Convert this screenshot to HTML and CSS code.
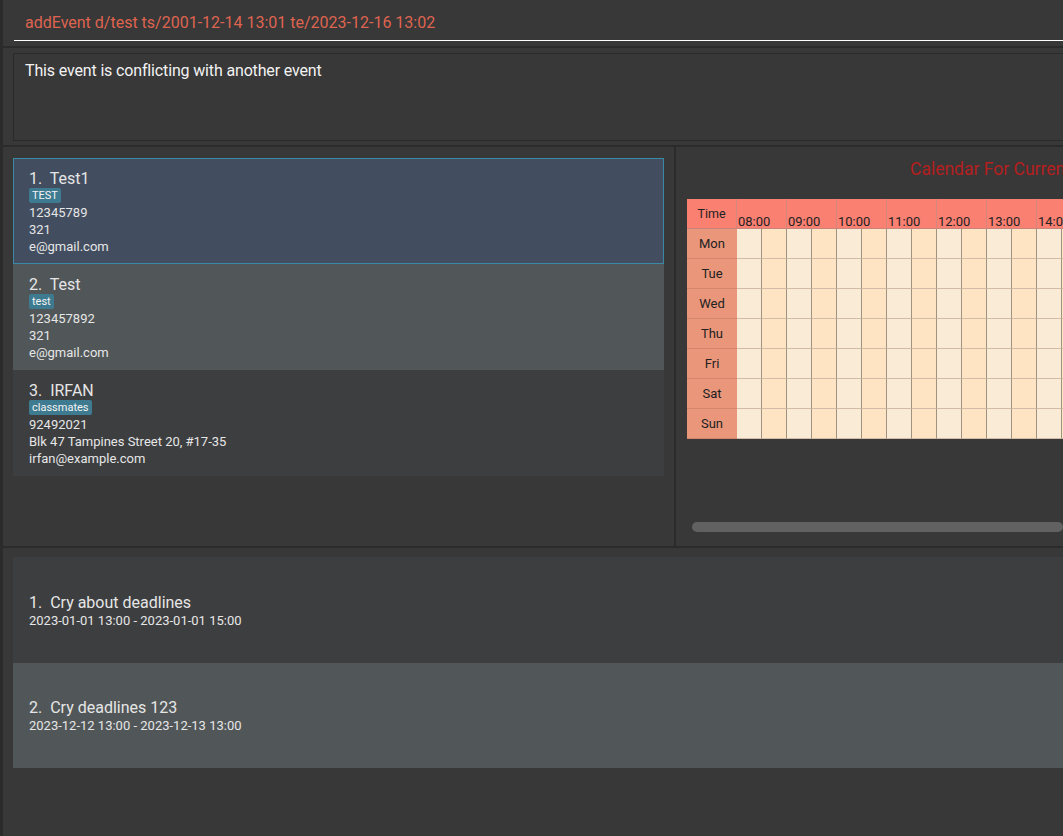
FILE: index.html
```html
<!DOCTYPE html>
<html>
<head>
<meta charset="utf-8">
<link rel="stylesheet" href="styles.css">
</head>
<body>
<div class="window">
  <div class="edge"></div>
  <div class="app">
    <div class="command">
      <div class="cmd-field">addEvent d/test ts/2001-12-14 13:01 te/2023-12-16 13:02</div>
    </div>
    <div class="divider-h"></div>
    <div class="result-pane">
      <div class="result-box">This event is conflicting with another event</div>
    </div>
    <div class="divider-h"></div>
    <div class="middle">
      <div class="person-pane">
        <div class="card person selected">
          <div class="name">1.  Test1</div>
          <div class="tags"><span class="tag">TEST</span></div>
          <div class="line">12345789</div>
          <div class="line">321</div>
          <div class="line">e@gmail.com</div>
        </div>
        <div class="card person even">
          <div class="name">2.  Test</div>
          <div class="tags"><span class="tag">test</span></div>
          <div class="line">123457892</div>
          <div class="line">321</div>
          <div class="line">e@gmail.com</div>
        </div>
        <div class="card person odd">
          <div class="name">3.  IRFAN</div>
          <div class="tags"><span class="tag">classmates</span></div>
          <div class="line">92492021</div>
          <div class="line">Blk 47 Tampines Street 20, #17-35</div>
          <div class="line">irfan@example.com</div>
        </div>
      </div>
      <div class="divider-v"></div>
      <div class="calendar-pane">
        <div class="cal-title">Calendar For Current Week</div>
        <div class="cal-grid" id="grid">
          <div class="hdr time">Time</div>
          <div class="hdr hour">08:00</div>
          <div class="hdr hour">09:00</div>
          <div class="hdr hour">10:00</div>
          <div class="hdr hour">11:00</div>
          <div class="hdr hour">12:00</div>
          <div class="hdr hour">13:00</div>
          <div class="hdr hour">14:00</div>
          <div class="hdr hour">15:00</div>
          <div class="hdr hour">16:00</div>
        </div>
        <div class="scrollbar"><div class="thumb"></div></div>
      </div>
    </div>
    <div class="divider-h"></div>
    <div class="event-pane">
      <div class="card event odd">
        <div class="name">1.  Cry about deadlines</div>
        <div class="line">2023-01-01 13:00 - 2023-01-01 15:00</div>
      </div>
      <div class="card event even">
        <div class="name">2.  Cry deadlines 123</div>
        <div class="line">2023-12-12 13:00 - 2023-12-13 13:00</div>
      </div>
    </div>
  </div>
</div>
<script>
  (function () {
    var grid = document.getElementById('grid');
    var days = ['Mon', 'Tue', 'Wed', 'Thu', 'Fri', 'Sat', 'Sun'];
    days.forEach(function (d) {
      var c = document.createElement('div');
      c.className = 'day';
      c.textContent = d;
      grid.appendChild(c);
      for (var i = 0; i < 18; i++) {
        var s = document.createElement('div');
        s.className = 'slot ' + (i % 2 === 0 ? 'a' : 'b');
        grid.appendChild(s);
      }
    });
  })();
</script>
</body>
</html>
```

FILE: styles.css
```css
html, body {
  margin: 0;
  padding: 0;
  background: #383838;
  width: 1063px;
  height: 836px;
  overflow: hidden;
  font-family: Roboto, "Noto Sans", sans-serif;
}

.window {
  display: flex;
  width: 1063px;
  height: 836px;
}

.edge {
  width: 3px;
  flex: none;
  background: #2b2b2b;
}

.app {
  flex: 1;
  display: flex;
  flex-direction: column;
  min-width: 0;
  overflow: hidden;
}

.command {
  height: 46px;
  padding-left: 11px;
  box-sizing: border-box;
}

.cmd-field {
  height: 41px;
  box-sizing: border-box;
  border-bottom: 1px solid #ffffff;
  padding: 13px 0 0 11px;
  color: #df6450;
  font-size: 16px;
  line-height: 20px;
  white-space: nowrap;
}

.divider-h {
  height: 2px;
  flex: none;
  background: #2b2b2b;
}

.result-pane {
  height: 97px;
  padding: 5px 0 4px 10px;
  box-sizing: border-box;
}

.result-box {
  height: 88px;
  box-sizing: border-box;
  border: 1px solid #2a2a2a;
  border-right: none;
  padding: 7px 0 0 11px;
  color: #f2f2f2;
  font-size: 16px;
  letter-spacing: -0.15px;
  line-height: 20px;
}

.middle {
  height: 399px;
  display: flex;
  flex: none;
}

.person-pane {
  width: 671px;
  flex: none;
  padding: 11px 10px 0 10px;
  box-sizing: border-box;
}

.divider-v {
  width: 2px;
  flex: none;
  background: #2b2b2b;
}

.card {
  color: #e6e6e6;
  box-sizing: border-box;
}

.card.person {
  height: 106px;
  padding: 12px 0 0 16px;
}

.card.selected {
  height: 106px;
  background: #424d5f;
  border: 1px solid #3a8aa5;
  padding: 11px 0 0 15px;
}

.card.even { background: #515658; }
.card.odd { background: #3d3e40; }

.name {
  font-size: 16px;
  line-height: 17px;
  white-space: pre;
}

.tags {
  height: 17px;
  display: flex;
  align-items: flex-start;
  padding-top: 1px;
  box-sizing: border-box;
}

.tag {
  background: #3e7b91;
  color: #f4f4f4;
  font-size: 11px;
  line-height: 15px;
  padding: 0 3px;
  border-radius: 2px;
}

.line {
  font-size: 13px;
  line-height: 17px;
  white-space: nowrap;
}

.calendar-pane {
  flex: 1;
  min-width: 0;
  overflow: hidden;
  padding: 0 0 0 11px;
  box-sizing: border-box;
  display: flex;
  flex-direction: column;
}

.cal-title {
  color: #b41f1f;
  font-size: 17.5px;
  line-height: 22px;
  padding: 11px 0 0 223px;
  height: 52px;
  box-sizing: border-box;
  white-space: nowrap;
}

.cal-grid {
  display: grid;
  grid-template-columns: 50px repeat(18, 25px);
  grid-template-rows: 30px repeat(7, 30px);
  width: max-content;
}

.hdr {
  background: #fa8072;
  color: #222;
  font-size: 12.5px;
  box-sizing: border-box;
  border-right: 1px solid #d6877d;
  border-bottom: 1px solid #c9837a;
}

.hdr.time {
  display: flex;
  align-items: center;
  justify-content: center;
  padding-bottom: 1px;
}

.hdr.hour {
  grid-column: span 2;
  display: flex;
  align-items: flex-end;
  padding: 0 0 0 1px;
  line-height: 13px;
  font-size: 13px;
}

.day {
  background: #e9967a;
  color: #222;
  font-size: 13px;
  display: flex;
  align-items: center;
  justify-content: center;
  box-sizing: border-box;
  border-bottom: 1px solid #d4866c;
}

.slot {
  box-sizing: border-box;
  border-right: 1px solid #9f927f;
  border-bottom: 1px solid #d2bca8;
}

.slot.a { background: #faebd7; }
.slot.b { background: #ffe4c4; }

.scrollbar {
  margin-top: 83px;
  padding-left: 5px;
}

.thumb {
  height: 10px;
  border-radius: 5px;
  background: #616161;
}

.event-pane {
  flex: 1;
  padding: 9px 0 0 10px;
  box-sizing: border-box;
}

.card.event {
  height: 106px;
  padding: 0 0 0 16px;
  display: flex;
  flex-direction: column;
  justify-content: center;
}

.card.event .name {
  line-height: 19px;
  padding-top: 1px;
}

.card.event + .card.event {
  height: 105px;
}
```
